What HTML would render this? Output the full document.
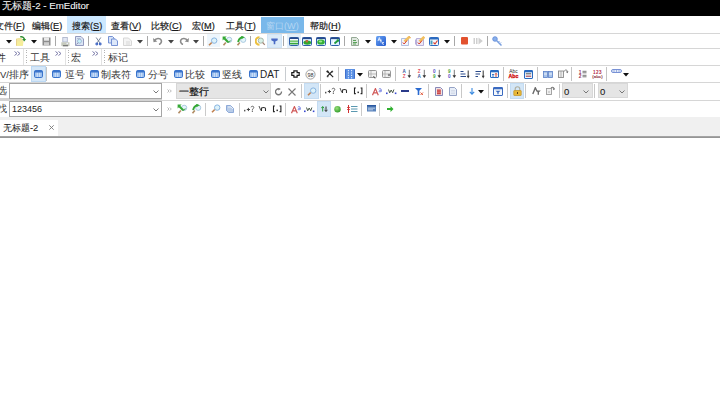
<!DOCTYPE html>
<html><head><meta charset="utf-8">
<style>
html,body{margin:0;padding:0;width:720px;height:417px;overflow:hidden;background:#fff;position:relative;font-family:"Liberation Sans",sans-serif;}
div,span,svg{position:absolute;display:block;}
.t{white-space:nowrap;line-height:10px;color:#1e1e1e;-webkit-text-stroke:0.2px currentColor;}
</style></head><body>
<div style="left:0;top:0;width:720px;height:16px;background:#000"></div>
<span class="t" style="left:2px;top:1px;font-size:9.7px;color:#f2f2f2;-webkit-text-stroke:0.1px #f2f2f2;">无标题-2 - EmEditor</span>
<div style="left:67px;top:16px;width:39px;height:17px;background:#cce8ff;"></div>
<div style="left:261px;top:17px;width:43px;height:16px;background:#79b8ea;"></div>
<span class="t" style="left:-5px;top:21px;font-size:9.2px;color:#1a1a1a;-webkit-text-stroke:0.2px #1a1a1a;">文件(<u>F</u>)</span>
<span class="t" style="left:32px;top:21px;font-size:9.2px;color:#1a1a1a;-webkit-text-stroke:0.2px #1a1a1a;">编辑(<u>E</u>)</span>
<span class="t" style="left:72px;top:21px;font-size:9.2px;color:#1a1a1a;-webkit-text-stroke:0.2px #1a1a1a;">搜索(<u>S</u>)</span>
<span class="t" style="left:111px;top:21px;font-size:9.2px;color:#1a1a1a;-webkit-text-stroke:0.2px #1a1a1a;">查看(<u>V</u>)</span>
<span class="t" style="left:151px;top:21px;font-size:9.2px;color:#1a1a1a;-webkit-text-stroke:0.2px #1a1a1a;">比较(<u>C</u>)</span>
<span class="t" style="left:192px;top:21px;font-size:9.2px;color:#1a1a1a;-webkit-text-stroke:0.2px #1a1a1a;">宏(<u>M</u>)</span>
<span class="t" style="left:226px;top:21px;font-size:9.2px;color:#1a1a1a;-webkit-text-stroke:0.2px #1a1a1a;">工具(<u>T</u>)</span>
<span class="t" style="left:310px;top:21px;font-size:9.2px;color:#1a1a1a;-webkit-text-stroke:0.2px #1a1a1a;">帮助(<u>H</u>)</span>
<span class="t" style="left:266px;top:21px;font-size:9.2px;color:#b4d6f2;-webkit-text-stroke:0;">窗口(<u>W</u>)</span>
<div style="left:0px;top:33px;width:720px;height:1px;background:#d6d6d6;"></div>
<div style="left:0px;top:48px;width:720px;height:1px;background:#d6d6d6;"></div>
<div style="left:0px;top:65px;width:720px;height:1px;background:#d6d6d6;"></div>
<div style="left:0px;top:82px;width:720px;height:1px;background:#d6d6d6;"></div>
<div style="left:0px;top:100px;width:720px;height:1px;background:#d6d6d6;"></div>
<svg style="left:6px;top:40px" width="6" height="4" viewBox="0 0 6 4"><path d="M0 0H6L3 3.5Z" fill="#111"/></svg>
<svg style="left:16px;top:36px" width="11" height="10" viewBox="0 0 11 10"><path d="M0.3 2.8L2 2H5.5L7.3 5L7 9.7H0.3Z" fill="#f2e6a0"/><path d="M0.3 9.7L1.5 5.2H7.5L6.5 9.7Z" fill="#f6ee9a"/><path d="M0.3 2.8V9.7" stroke="#e0c070" stroke-width="0.8"/><path d="M4.2 0.9C6 0.4 8 1.2 8.5 3.5" fill="none" stroke="#2e8e30" stroke-width="1.5"/><path d="M6.2 3H10.2L8.2 5.6Z" fill="#2e8e30"/></svg>
<svg style="left:31px;top:40px" width="6" height="4" viewBox="0 0 6 4"><path d="M0 0H6L3 3.5Z" fill="#111"/></svg>
<svg style="left:42px;top:37px" width="9" height="9" viewBox="0 0 9 9"><rect x="0.5" y="0.5" width="8" height="8" fill="#8d8d8d"/><rect x="2" y="0.5" width="5" height="3.2" fill="#e9e9e9"/><rect x="2" y="5.2" width="5" height="3.3" fill="#cfcfcf"/></svg>
<div style="left:55px;top:36px;width:1px;height:10px;background:#a8a8a8;"></div>
<svg style="left:61px;top:37px" width="9" height="10" viewBox="0 0 9 10"><rect x="1.8" y="0.5" width="4.5" height="4.5" fill="#e2e8f4" stroke="#a8b0c8" stroke-width="0.8"/><path d="M0.3 5.2H8.5V8.2L7.5 9.3H1.2L0.3 8.2Z" fill="#c6cabe"/><rect x="2" y="8" width="5" height="1.3" fill="#7a7a7a"/><rect x="5.5" y="6" width="1.5" height="1" fill="#eef"/></svg>
<svg style="left:75px;top:36px" width="9" height="10" viewBox="0 0 9 10"><path d="M0.5 0.5H6L8.5 3V9.5H0.5Z" fill="#dbe6f4" stroke="#8a90b8" stroke-width="0.9"/><path d="M2 2.5H5.5" stroke="#9aa0c0" stroke-width="0.6"/><circle cx="4.5" cy="5.2" r="2" fill="#c8f2fa" stroke="#90a8c8" stroke-width="0.7"/><path d="M3 6.8L1.5 8.5" stroke="#8080a8" stroke-width="0.9"/></svg>
<div style="left:88px;top:36px;width:1px;height:10px;background:#a8a8a8;"></div>
<svg style="left:95px;top:37px" width="7" height="9" viewBox="0 0 7 9"><path d="M1.2 0.5L4.8 5.8M5.8 0.5L2.2 5.8" stroke="#6a7890" stroke-width="0.9"/><circle cx="1.8" cy="7" r="1.4" fill="#3a60c0"/><circle cx="5.2" cy="7" r="1.4" fill="#3a60c0"/><circle cx="1.8" cy="7" r="0.5" fill="#9ab0e0"/><circle cx="5.2" cy="7" r="0.5" fill="#9ab0e0"/></svg>
<svg style="left:108px;top:36px" width="10" height="10" viewBox="0 0 10 10"><path d="M0.5 0.5H4.5L6 2V7H0.5Z" fill="#d8e4f8" stroke="#6a88d0" stroke-width="0.9"/><path d="M3.5 3H7.5L9.5 5V9.5H3.5Z" fill="#dde8fa" stroke="#6a88d0" stroke-width="0.9"/></svg>
<svg style="left:123px;top:37px" width="9" height="9" viewBox="0 0 9 9"><path d="M0.5 1H5.5L8.5 4V8.5H0.5Z" fill="#f4f4f4" stroke="#d2d2d2" stroke-width="0.9"/><rect x="3" y="4" width="4" height="4" fill="#e6e6e6"/></svg>
<svg style="left:137px;top:40px" width="6" height="4" viewBox="0 0 6 4"><path d="M0 0H6L3 3.5Z" fill="#444"/></svg>
<div style="left:147px;top:36px;width:1px;height:10px;background:#a8a8a8;"></div>
<svg style="left:153px;top:37px" width="10" height="8" viewBox="0 0 10 8"><g><path d="M1.5 3.5C3 1 7 0.8 8.2 3.2C9 5 7.5 7 6 7.5" fill="none" stroke="#8b8b8b" stroke-width="1.6"/><path d="M0 1L0.5 5.2L4.3 4.6Z" fill="#8b8b8b"/></g></svg>
<svg style="left:168px;top:40px" width="6" height="4" viewBox="0 0 6 4"><path d="M0 0H6L3 3.5Z" fill="#444"/></svg>
<svg style="left:179px;top:37px" width="10" height="8" viewBox="0 0 10 8"><g transform="translate(10 0) scale(-1 1)"><path d="M1.5 3.5C3 1 7 0.8 8.2 3.2C9 5 7.5 7 6 7.5" fill="none" stroke="#8b8b8b" stroke-width="1.6"/><path d="M0 1L0.5 5.2L4.3 4.6Z" fill="#8b8b8b"/></g></svg>
<svg style="left:193px;top:40px" width="6" height="4" viewBox="0 0 6 4"><path d="M0 0H6L3 3.5Z" fill="#444"/></svg>
<div style="left:203px;top:36px;width:1px;height:10px;background:#a8a8a8;"></div>
<div style="left:207px;top:34px;width:13px;height:13px;background:#eef6fc;box-sizing:border-box;border:1px solid #eef6fc;"></div>
<svg style="left:208px;top:37px" width="10" height="9" viewBox="0 0 10 9"><path d="M1 8.3L3.8 5.5" stroke="#c08050" stroke-width="1.6"/><circle cx="6.2" cy="3.6" r="2.7" fill="#ddf2fa" stroke="#88b4e0" stroke-width="1"/></svg>
<svg style="left:222px;top:36px" width="11" height="10" viewBox="0 0 11 10"><path d="M1.5 9.3L3.8 6.6" stroke="#b08a62" stroke-width="1.6"/><circle cx="7.2" cy="3.8" r="2.6" fill="#e4f5fa" stroke="#a4c4dc" stroke-width="0.9"/><path d="M2.2 2.2L6.2 6.2" stroke="#34a834" stroke-width="2"/><path d="M0.6 0.6H4.6L0.6 4.6Z" fill="#34a834"/><path d="M6 6.3C7 6.3 8 5.6 8.2 4.5" fill="none" stroke="#2a9a2a" stroke-width="1"/></svg>
<svg style="left:236px;top:36px" width="11" height="10" viewBox="0 0 11 10"><path d="M1.5 9.3L3.8 6.6" stroke="#b08a62" stroke-width="1.6"/><circle cx="7.2" cy="3.8" r="2.6" fill="#e4f5fa" stroke="#a4c4dc" stroke-width="0.9"/><path d="M2.2 6.2C2.5 3.5 4 1.8 6.5 1.2" fill="none" stroke="#34a834" stroke-width="1.9"/><path d="M5.2 -0.4L8.8 1.3L5.4 3.2Z" fill="#34a834"/></svg>
<div style="left:250px;top:36px;width:1px;height:10px;background:#a8a8a8;"></div>
<svg style="left:255px;top:36px" width="11" height="10" viewBox="0 0 11 10"><path d="M4.5 1.2A3.8 3.8 0 0 0 4.5 8.8" fill="none" stroke="#ecc040" stroke-width="2"/><circle cx="5.8" cy="4.6" r="2.6" fill="#d8f0e8" stroke="#a0b0a0" stroke-width="0.9"/><path d="M7.6 6.5L9.8 8.8" stroke="#a08070" stroke-width="1.2"/></svg>
<div style="left:267px;top:34px;width:15px;height:14px;background:#dcebf8;box-sizing:border-box;border:1px solid #d0e4f6;"></div>
<svg style="left:271px;top:38px" width="7" height="7" viewBox="0 0 7 7"><path d="M0.3 0.6H6.7V2.2L4.3 3.6V6.3H2.7V3.6L0.3 2.2Z" fill="#4a6ac4"/></svg>
<div style="left:283px;top:36px;width:1px;height:10px;background:#a8a8a8;"></div>
<div style="left:287px;top:34px;width:14px;height:14px;background:#e3eff9;box-sizing:border-box;border:1px solid #e3eff9;"></div>
<svg style="left:289px;top:37px" width="10" height="9" viewBox="0 0 10 9"><rect x="0.5" y="0.5" width="9" height="8" rx="1" fill="#dcefff" stroke="#2f5fa8" stroke-width="1"/><rect x="0.5" y="0.5" width="9" height="1.6" fill="#26488a"/><rect x="1" y="2.2" width="8" height="1.3" fill="#fff"/><rect x="1" y="3.5" width="8" height="1.4" fill="#5cc050"/><rect x="1" y="4.9" width="8" height="0.9" fill="#e8fff0"/><rect x="1" y="5.8" width="8" height="1.6" fill="#3aa83a"/></svg>
<svg style="left:302px;top:37px" width="10" height="9" viewBox="0 0 10 9"><rect x="0.5" y="0.5" width="9" height="8" rx="1" fill="#dcefff" stroke="#2f5fa8" stroke-width="1"/><rect x="0.5" y="0.5" width="9" height="1.6" fill="#26488a"/><ellipse cx="5.3" cy="5.6" rx="3.8" ry="2.2" fill="#2ea82e"/><rect x="3.6" y="3" width="2.4" height="2.4" fill="#b86a40"/></svg>
<svg style="left:316px;top:37px" width="10" height="9" viewBox="0 0 10 9"><rect x="0.5" y="0.5" width="9" height="8" rx="1" fill="#dcefff" stroke="#2f5fa8" stroke-width="1"/><rect x="0.5" y="0.5" width="9" height="1.6" fill="#26488a"/><ellipse cx="5" cy="5" rx="3.8" ry="2.6" fill="#34b034"/><ellipse cx="4.5" cy="4.5" rx="1.8" ry="1" fill="#a0e890"/></svg>
<svg style="left:330px;top:37px" width="10" height="9" viewBox="0 0 10 9"><rect x="0.5" y="0.5" width="9" height="8" rx="1" fill="#dcefff" stroke="#2f5fa8" stroke-width="1"/><rect x="0.5" y="0.5" width="9" height="1.6" fill="#26488a"/><path d="M3 7.5L4 3" stroke="#fff" stroke-width="1.2"/><path d="M4.5 6.5L8.5 3" stroke="#1e9a3a" stroke-width="1.8"/><path d="M6.5 2.5H9V5Z" fill="#1e9a3a"/></svg>
<div style="left:344px;top:36px;width:1px;height:10px;background:#a8a8a8;"></div>
<svg style="left:351px;top:37px" width="8" height="9" viewBox="0 0 8 9"><path d="M0.5 0.5H5.5L7.5 2.5V8.5H0.5Z" fill="#dfe7df" stroke="#8aa08a" stroke-width="0.9"/><path d="M2 3.5H5M2 5.5H6M2 7H5" stroke="#4a9a4a" stroke-width="0.9"/></svg>
<svg style="left:365px;top:40px" width="6" height="4" viewBox="0 0 6 4"><path d="M0 0H6L3 3.5Z" fill="#111"/></svg>
<svg style="left:376px;top:36px" width="10" height="10" viewBox="0 0 10 10"><defs><linearGradient id="gb" x1="0" y1="0" x2="1" y2="1"><stop offset="0" stop-color="#6aa4f4"/><stop offset="1" stop-color="#2258cc"/></linearGradient></defs><rect x="0" y="0" width="10" height="10" rx="1.5" fill="url(#gb)"/><path d="M2 5L3.3 1.5L4.6 5M2.5 3.8H4.2" stroke="#e8f0ff" stroke-width="0.9" fill="none"/><path d="M5 3.5V6.5M7.8 6.5C6 5.5 5.5 8.5 7.8 8.3" stroke="#fff" stroke-width="1" fill="none"/></svg>
<svg style="left:391px;top:40px" width="6" height="4" viewBox="0 0 6 4"><path d="M0 0H6L3 3.5Z" fill="#111"/></svg>
<svg style="left:401px;top:36px" width="10" height="10" viewBox="0 0 10 10"><path d="M0.5 2.5H7.5V9.5H0.5Z" fill="#f2f4fa" stroke="#a0b0d8" stroke-width="0.8"/><path d="M3.5 5.5L8.5 0.8" stroke="#f2c060" stroke-width="2.6"/><path d="M8 0.3L9.8 2" stroke="#e8a040" stroke-width="1"/><path d="M1.8 6.5L3.2 8L6 4.5" fill="none" stroke="#d83a2a" stroke-width="1"/></svg>
<svg style="left:415px;top:36px" width="10" height="10" viewBox="0 0 10 10"><path d="M1.5 2.5H8.5V9.5H1.5Z" fill="#ece8f6" stroke="#a8a0d0" stroke-width="0.8"/><path d="M0.5 3.5V8.5" stroke="#b8b0dc"/><path d="M4.5 5.5L9.3 0.8" stroke="#f2c060" stroke-width="2.6"/><path d="M2.8 6.5L4.2 8L7 4.5" fill="none" stroke="#d83a2a" stroke-width="1"/></svg>
<svg style="left:429px;top:37px" width="10" height="9" viewBox="0 0 10 9"><rect x="0.5" y="0.5" width="9" height="8" rx="1" fill="#f4f8fc" stroke="#2a6ac0" stroke-width="1"/><rect x="0.5" y="0.5" width="9" height="2" fill="#2a6ac0"/><rect x="1.5" y="3.5" width="2" height="4" fill="#48a0c0"/><path d="M4.5 5.5L6 7L8.5 3.5" fill="none" stroke="#d83a2a" stroke-width="1.1"/></svg>
<svg style="left:444px;top:40px" width="6" height="4" viewBox="0 0 6 4"><path d="M0 0H6L3 3.5Z" fill="#111"/></svg>
<div style="left:454px;top:36px;width:1px;height:10px;background:#a8a8a8;"></div>
<svg style="left:461px;top:37px" width="7" height="8" viewBox="0 0 7 8"><rect x="0" y="0" width="7" height="7.5" rx="1" fill="#e2512e"/></svg>
<svg style="left:473px;top:37px" width="10" height="8" viewBox="0 0 10 8"><rect x="0.5" y="1" width="1.5" height="6" fill="#cfcfcf"/><rect x="3" y="1" width="1.5" height="6" fill="#cfcfcf"/><path d="M5.5 0.5L9.8 4L5.5 7.5Z" fill="#cfcfcf"/></svg>
<div style="left:487px;top:36px;width:1px;height:10px;background:#a8a8a8;"></div>
<svg style="left:492px;top:36px" width="11" height="10" viewBox="0 0 11 10"><circle cx="3" cy="3" r="2.3" fill="#8ab0ea" stroke="#5a86d8" stroke-width="0.8"/><path d="M4.5 4.5L9.5 9.5" stroke="#7aa0e0" stroke-width="1.5"/><path d="M6.5 6L7.5 5M8 7.5L9 6.5" stroke="#7aa0e0"/></svg>
<span class="t" style="left:-4px;top:53px;font-size:9.5px;color:#333;-webkit-text-stroke:0;">件</span>
<svg style="left:14px;top:51px" width="7" height="5" viewBox="0 0 7 5"><path d="M0.5 0.5L3 2.5L0.5 4.5M3.5 0.5L6 2.5L3.5 4.5" fill="none" stroke="#7878a8" stroke-width="1"/></svg>
<svg style="left:55px;top:51px" width="7" height="5" viewBox="0 0 7 5"><path d="M0.5 0.5L3 2.5L0.5 4.5M3.5 0.5L6 2.5L3.5 4.5" fill="none" stroke="#7878a8" stroke-width="1"/></svg>
<svg style="left:92px;top:51px" width="7" height="5" viewBox="0 0 7 5"><path d="M0.5 0.5L3 2.5L0.5 4.5M3.5 0.5L6 2.5L3.5 4.5" fill="none" stroke="#7878a8" stroke-width="1"/></svg>
<div style="left:23px;top:49px;width:1px;height:16px;background:#e2e2e2;"></div>
<div style="left:65px;top:49px;width:1px;height:16px;background:#e2e2e2;"></div>
<div style="left:101px;top:49px;width:1px;height:16px;background:#e2e2e2;"></div>
<div style="left:26px;top:50px;width:1px;height:14px;background:repeating-linear-gradient(to bottom,#b4b4b4 0 1px,transparent 1px 2.5px)"></div>
<div style="left:68px;top:50px;width:1px;height:14px;background:repeating-linear-gradient(to bottom,#b4b4b4 0 1px,transparent 1px 2.5px)"></div>
<div style="left:104px;top:50px;width:1px;height:14px;background:repeating-linear-gradient(to bottom,#b4b4b4 0 1px,transparent 1px 2.5px)"></div>
<span class="t" style="left:30px;top:53px;font-size:9.5px;color:#333;-webkit-text-stroke:0;">工具</span>
<span class="t" style="left:71px;top:53px;font-size:9.5px;color:#333;-webkit-text-stroke:0;">宏</span>
<span class="t" style="left:108px;top:53px;font-size:9.5px;color:#333;-webkit-text-stroke:0;">标记</span>
<span class="t" style="left:0px;top:70px;font-size:9.5px;color:#333;-webkit-text-stroke:0;">V/排序</span>
<div style="left:31px;top:66px;width:15px;height:16px;background:#d5e7f8;box-sizing:border-box;border:1px solid #bcd9f4;"></div>
<svg style="left:34px;top:70px" width="9" height="8" viewBox="0 0 9 8"><rect x="0.5" y="0.5" width="8" height="7" rx="1.2" fill="#9cc0ee" stroke="#3a74cc" stroke-width="1"/><rect x="0.5" y="0.5" width="8" height="2" rx="1" fill="#3a74cc"/><path d="M3.3 2.8V7M5.7 2.8V7" stroke="#eef4ff" stroke-width="0.7"/></svg>
<div style="left:46px;top:67px;width:1px;height:14px;background:#c4c4c4;"></div>
<svg style="left:52px;top:70px" width="9" height="8" viewBox="0 0 9 8"><rect x="0.5" y="0.5" width="8" height="7" rx="1.2" fill="#9cc0ee" stroke="#3a74cc" stroke-width="1"/><rect x="0.5" y="0.5" width="8" height="2" rx="1" fill="#3a74cc"/><path d="M3.3 2.8V7M5.7 2.8V7" stroke="#eef4ff" stroke-width="0.7"/></svg>
<span class="t" style="left:65px;top:70px;font-size:9.5px;color:#333;-webkit-text-stroke:0;">逗号</span>
<svg style="left:90px;top:70px" width="9" height="8" viewBox="0 0 9 8"><rect x="0.5" y="0.5" width="8" height="7" rx="1.2" fill="#9cc0ee" stroke="#3a74cc" stroke-width="1"/><rect x="0.5" y="0.5" width="8" height="2" rx="1" fill="#3a74cc"/><path d="M3.3 2.8V7M5.7 2.8V7" stroke="#eef4ff" stroke-width="0.7"/></svg>
<span class="t" style="left:101px;top:70px;font-size:9.5px;color:#333;-webkit-text-stroke:0;">制表符</span>
<svg style="left:136px;top:70px" width="9" height="8" viewBox="0 0 9 8"><rect x="0.5" y="0.5" width="8" height="7" rx="1.2" fill="#9cc0ee" stroke="#3a74cc" stroke-width="1"/><rect x="0.5" y="0.5" width="8" height="2" rx="1" fill="#3a74cc"/><path d="M3.3 2.8V7M5.7 2.8V7" stroke="#eef4ff" stroke-width="0.7"/></svg>
<span class="t" style="left:148px;top:70px;font-size:9.5px;color:#333;-webkit-text-stroke:0;">分号</span>
<svg style="left:174px;top:70px" width="9" height="8" viewBox="0 0 9 8"><rect x="0.5" y="0.5" width="8" height="7" rx="1.2" fill="#9cc0ee" stroke="#3a74cc" stroke-width="1"/><rect x="0.5" y="0.5" width="8" height="2" rx="1" fill="#3a74cc"/><path d="M3.3 2.8V7M5.7 2.8V7" stroke="#eef4ff" stroke-width="0.7"/></svg>
<span class="t" style="left:185px;top:70px;font-size:9.5px;color:#333;-webkit-text-stroke:0;">比较</span>
<svg style="left:211px;top:70px" width="9" height="8" viewBox="0 0 9 8"><rect x="0.5" y="0.5" width="8" height="7" rx="1.2" fill="#9cc0ee" stroke="#3a74cc" stroke-width="1"/><rect x="0.5" y="0.5" width="8" height="2" rx="1" fill="#3a74cc"/><path d="M3.3 2.8V7M5.7 2.8V7" stroke="#eef4ff" stroke-width="0.7"/></svg>
<span class="t" style="left:222px;top:70px;font-size:9.5px;color:#333;-webkit-text-stroke:0;">竖线</span>
<svg style="left:249px;top:70px" width="9" height="8" viewBox="0 0 9 8"><rect x="0.5" y="0.5" width="8" height="7" rx="1.2" fill="#9cc0ee" stroke="#3a74cc" stroke-width="1"/><rect x="0.5" y="0.5" width="8" height="2" rx="1" fill="#3a74cc"/><path d="M3.3 2.8V7M5.7 2.8V7" stroke="#eef4ff" stroke-width="0.7"/></svg>
<span class="t" style="left:260px;top:70px;font-size:10px;color:#1e1e1e;-webkit-text-stroke:0;">DAT</span>
<div style="left:285px;top:67px;width:1px;height:14px;background:#c8ccd0;"></div>
<svg style="left:291px;top:70px" width="9" height="8" viewBox="0 0 9 8"><path d="M2.9 0.8H6.1V2.6H8.2V5.4H6.1V7.2H2.9V5.4H0.8V2.6H2.9Z" fill="#fff" stroke="#181818" stroke-width="1.2" stroke-linejoin="miter"/></svg>
<svg style="left:305px;top:69px" width="11" height="11" viewBox="0 0 11 11"><circle cx="5.5" cy="5.5" r="4.6" fill="#fcfcfc" stroke="#8a8a8a" stroke-width="0.8"/><text x="5.5" y="7.6" font-size="5.5" text-anchor="middle" fill="#333" font-family="Liberation Sans">98</text></svg>
<div style="left:320px;top:67px;width:1px;height:14px;background:#c4c4c4;"></div>
<svg style="left:326px;top:70px" width="8" height="8" viewBox="0 0 8 8"><path d="M1 1L7.2 7.2M6.5 1L1.2 6.3" stroke="#222" stroke-width="1.1"/><circle cx="1.5" cy="1.5" r="1.1" fill="#222"/><circle cx="6.3" cy="1.6" r="0.9" fill="#444"/><circle cx="1.6" cy="6.4" r="0.9" fill="#444"/></svg>
<div style="left:338px;top:67px;width:1px;height:14px;background:#c4c4c4;"></div>
<svg style="left:345px;top:69px" width="10" height="10" viewBox="0 0 10 10"><rect x="0" y="0" width="10" height="10" rx="0.8" fill="#5a90e4"/><path d="M3.4 1V9.5M6.6 1V9.5" stroke="#e8f0ff" stroke-width="1" stroke-dasharray="1.2 1.2"/><path d="M0.5 0.5V9.5M9.5 0.5V9.5" stroke="#3a6ac8" stroke-width="0.8"/></svg>
<svg style="left:357px;top:73px" width="6" height="4" viewBox="0 0 6 4"><path d="M0 0H6L3 3.5Z" fill="#111"/></svg>
<svg style="left:368px;top:70px" width="9" height="9" viewBox="0 0 9 9"><rect x="0.5" y="0.5" width="8" height="7" rx="1" fill="#f2f2f2" stroke="#8a8a8a" stroke-width="0.9"/><path d="M3 1V7.5M1 4H8" stroke="#aaa" stroke-width="0.8"/><path d="M5.5 6L7 8.5" stroke="#555"/></svg>
<svg style="left:382px;top:70px" width="9" height="9" viewBox="0 0 9 9"><rect x="0.5" y="0.5" width="8" height="7" rx="1" fill="#f0f0f0" stroke="#8a8a8a" stroke-width="0.9"/><path d="M3 1V7.5M1 4H8" stroke="#aaa" stroke-width="0.8"/><circle cx="7" cy="5" r="1.2" fill="#888"/></svg>
<div style="left:395px;top:67px;width:1px;height:14px;background:#c4c4c4;"></div>
<svg style="left:402px;top:69px" width="10" height="10" viewBox="0 0 10 10"><text x="2.2" y="4.3" font-size="4.6" font-weight="bold" text-anchor="middle" fill="#3a5aa0" font-family="Liberation Sans">A</text><text x="2.2" y="9" font-size="4.6" font-weight="bold" text-anchor="middle" fill="#e05060" font-family="Liberation Sans">Z</text><path d="M7.3 0.8V7" stroke="#7a7a7a" stroke-width="1"/><path d="M5.5 6.2L7.3 9L9.1 6.2Z" fill="#333"/></svg>
<svg style="left:417px;top:69px" width="10" height="10" viewBox="0 0 10 10"><text x="2.2" y="4.3" font-size="4.6" font-weight="bold" text-anchor="middle" fill="#e05060" font-family="Liberation Sans">Z</text><text x="2.2" y="9" font-size="4.6" font-weight="bold" text-anchor="middle" fill="#3a5aa0" font-family="Liberation Sans">A</text><path d="M7.3 0.8V7" stroke="#7a7a7a" stroke-width="1"/><path d="M5.5 6.2L7.3 9L9.1 6.2Z" fill="#333"/></svg>
<svg style="left:432px;top:69px" width="10" height="10" viewBox="0 0 10 10"><text x="2.2" y="4.3" font-size="4.6" font-weight="bold" text-anchor="middle" fill="#5050c8" font-family="Liberation Sans">0</text><text x="2.2" y="9" font-size="4.6" font-weight="bold" text-anchor="middle" fill="#40a040" font-family="Liberation Sans">9</text><path d="M7.3 0.8V7" stroke="#7a7a7a" stroke-width="1"/><path d="M5.5 6.2L7.3 9L9.1 6.2Z" fill="#333"/></svg>
<svg style="left:447px;top:69px" width="10" height="10" viewBox="0 0 10 10"><text x="2.2" y="4.3" font-size="4.6" font-weight="bold" text-anchor="middle" fill="#40a040" font-family="Liberation Sans">9</text><text x="2.2" y="9" font-size="4.6" font-weight="bold" text-anchor="middle" fill="#5050c8" font-family="Liberation Sans">0</text><path d="M7.3 0.8V7" stroke="#7a7a7a" stroke-width="1"/><path d="M5.5 6.2L7.3 9L9.1 6.2Z" fill="#333"/></svg>
<svg style="left:460px;top:70px" width="10" height="9" viewBox="0 0 10 9"><path d="M0.5 1.5H3.5M0.5 4H5.5M0.5 6.5H6" stroke="#2a4a8a" stroke-width="1.1"/><path d="M8.2 0.5V7" stroke="#333"/><path d="M6.8 5.8L8.2 8.5L9.6 5.8Z" fill="#333"/></svg>
<svg style="left:475px;top:70px" width="10" height="9" viewBox="0 0 10 9"><path d="M0.5 1.5H6M0.5 4H5M0.5 6.5H3" stroke="#2a4a8a" stroke-width="1.1"/><path d="M8.2 0.5V7" stroke="#333"/><path d="M6.8 5.8L8.2 8.5L9.6 5.8Z" fill="#333"/></svg>
<svg style="left:490px;top:70px" width="9" height="8" viewBox="0 0 9 8"><rect x="0.5" y="0.5" width="8" height="7" rx="0.5" fill="#f4f8fc" stroke="#2a6ac0" stroke-width="1"/><rect x="0.5" y="0.5" width="8" height="1.8" fill="#2a6ac0"/><path d="M2 4.5H4M2 6H4" stroke="#3a7ad0"/><path d="M6 3.5V7M5 4.5L6 3.3L7 4.5" stroke="#d03a2a" stroke-width="0.9" fill="none"/></svg>
<div style="left:503px;top:67px;width:1px;height:14px;background:#c4c4c4;"></div>
<svg style="left:508px;top:69px" width="11" height="10" viewBox="0 0 11 10"><text x="5.5" y="4.3" font-size="4.8" text-anchor="middle" fill="#222" font-family="Liberation Sans">Abc</text><text x="5.5" y="9.2" font-size="5.2" font-weight="bold" text-anchor="middle" fill="#d01010" font-family="Liberation Sans" stroke="#d01010" stroke-width="0.3">Abc</text></svg>
<svg style="left:524px;top:70px" width="9" height="9" viewBox="0 0 9 9"><rect x="0.5" y="0.5" width="8" height="8" rx="0.5" fill="#f4f8fc" stroke="#2a6ac0" stroke-width="1"/><rect x="0.5" y="0.5" width="8" height="1.8" fill="#2a6ac0"/><path d="M1.8 3.8H7.2" stroke="#555" stroke-width="1"/><path d="M1.8 6.2H7.2" stroke="#a04050" stroke-width="1.1"/></svg>
<div style="left:537px;top:67px;width:1px;height:14px;background:#c4c4c4;"></div>
<svg style="left:543px;top:71px" width="10" height="7" viewBox="0 0 10 7"><rect x="0.5" y="0.5" width="4" height="6" fill="#a8c4ea" stroke="#5a80c8" stroke-width="0.8"/><rect x="5.5" y="0.5" width="4" height="6" fill="#a8c4ea" stroke="#5a80c8" stroke-width="0.8"/><path d="M1 3H4M6 3H9" stroke="#fff" stroke-width="0.8"/></svg>
<svg style="left:558px;top:69px" width="11" height="9" viewBox="0 0 11 9"><rect x="0.5" y="2" width="5" height="6.5" fill="#eee" stroke="#8a8a8a" stroke-width="0.9"/><path d="M3 2V8.5" stroke="#999" stroke-width="0.7"/><path d="M6 2.5C7 0.5 9 0.5 9.5 2.5" fill="none" stroke="#777"/><path d="M8 2.5H10.5L9.2 4.2Z" fill="#555"/></svg>
<div style="left:571px;top:67px;width:1px;height:14px;background:#c4c4c4;"></div>
<svg style="left:578px;top:69px" width="9" height="10" viewBox="0 0 9 10"><text x="2" y="4.5" font-size="4.8" font-weight="bold" text-anchor="middle" fill="#9a3050" font-family="Liberation Sans">1</text><text x="2" y="9" font-size="4.8" font-weight="bold" text-anchor="middle" fill="#9a3050" font-family="Liberation Sans">2</text><path d="M4.5 2.3H8.5M4.5 3.8H8.5M4.5 6.3H8.5M4.5 7.8H8.5" stroke="#555" stroke-width="0.8"/></svg>
<svg style="left:592px;top:69px" width="11" height="10" viewBox="0 0 11 10"><text x="5.5" y="4.5" font-size="4.6" text-anchor="middle" fill="#b02848" font-weight="bold" font-family="Liberation Sans" letter-spacing="0.4">123</text><text x="5.5" y="9" font-size="4.4" font-weight="bold" text-anchor="middle" fill="#8a2838" font-family="Liberation Sans">(abc)</text></svg>
<div style="left:606px;top:67px;width:1px;height:14px;background:#c4c4c4;"></div>
<svg style="left:611px;top:69px" width="11" height="4" viewBox="0 0 11 4"><rect x="0.5" y="0.5" width="10" height="3" rx="1.5" fill="#e4ecfa" stroke="#6a86d0" stroke-width="0.9"/><path d="M3 1V3M5.5 1V3M8 1V3" stroke="#6a86d0" stroke-width="0.6"/></svg>
<svg style="left:623px;top:73px" width="6" height="4" viewBox="0 0 6 4"><path d="M0 0H6L3 3.5Z" fill="#111"/></svg>
<span class="t" style="left:-3px;top:86px;font-size:9.5px;color:#333;-webkit-text-stroke:0;">选</span>
<div style="left:0px;top:98px;width:162px;height:3px;background:#d3d3d3;"></div>
<div style="left:9px;top:83px;width:153px;height:16px;background:#fff;box-sizing:border-box;border:1px solid #a6a6a6;"></div>
<svg style="left:153px;top:90px" width="6" height="4" viewBox="0 0 6 4"><path d="M0.5 0.5L3 3L5.5 0.5" fill="none" stroke="#6a6a6a" stroke-width="0.9"/></svg>
<svg style="left:167px;top:89px" width="5" height="4" viewBox="0 0 5 4"><path d="M0.5 0.5L2 2L0.5 3.5M2.8 0.5L4.3 2L2.8 3.5" fill="none" stroke="#b0b0b0" stroke-width="0.9"/></svg>
<div style="left:162px;top:83px;width:1px;height:16px;background:#fff;"></div>
<div style="left:176px;top:83px;width:95px;height:16px;background:#e5e5e5;box-sizing:border-box;border:1px solid #d6d6d6;"></div>
<span class="t" style="left:179px;top:87px;font-size:9.5px;color:#111;">一整行</span>
<svg style="left:263px;top:90px" width="6" height="4" viewBox="0 0 6 4"><path d="M0.5 0.5L3 3L5.5 0.5" fill="none" stroke="#6a6a6a" stroke-width="0.9"/></svg>
<svg style="left:275px;top:88px" width="8" height="8" viewBox="0 0 8 8"><path d="M6.5 3.5A3 3 0 1 1 4 0.8" fill="none" stroke="#777" stroke-width="1.3"/><path d="M3.2 -0.5L5.8 1L3.4 2.6Z" fill="#777"/></svg>
<svg style="left:288px;top:88px" width="8" height="8" viewBox="0 0 8 8"><path d="M0.5 0.5L7.5 7.5M7.5 0.5L0.5 7.5" stroke="#777" stroke-width="1.1"/></svg>
<div style="left:301px;top:84px;width:1px;height:14px;background:#c8c8c8;"></div>
<div style="left:304px;top:83px;width:15px;height:16px;background:#d3e6f7;box-sizing:border-box;border:1px solid #c4dcf2;"></div>
<svg style="left:307px;top:87px" width="11" height="9" viewBox="0 0 11 9"><path d="M1 8.3L3.8 5.5" stroke="#c08050" stroke-width="1.6"/><circle cx="6.2" cy="3.6" r="2.7" fill="#ddf2fa" stroke="#88b4e0" stroke-width="1"/></svg>
<div style="left:320px;top:84px;width:1px;height:14px;background:#c8c8c8;"></div>
<svg style="left:324px;top:87px" width="12" height="8" viewBox="0 0 12 8"><rect x="1" y="4.8" width="1.4" height="1.6" fill="#555"/><path d="M3.8 4.5H7M5.4 2.9V6.1" stroke="#444" stroke-width="1"/><path d="M8 2.3C8 1 10.8 0.8 10.8 2.4C10.8 3.6 9.4 3.6 9.4 5" fill="none" stroke="#555" stroke-width="0.9"/><rect x="8.8" y="5.6" width="1.2" height="1.2" fill="#555"/></svg>
<svg style="left:339px;top:87px" width="9" height="7" viewBox="0 0 9 7"><path d="M1 1L2.8 5.5" stroke="#444" stroke-width="0.9"/><path d="M3.5 6V2.5M3.5 3.2C4.2 2.2 7.5 2 7.5 3.5V6" fill="none" stroke="#333" stroke-width="1.05"/></svg>
<svg style="left:353px;top:87px" width="11" height="8" viewBox="0 0 11 8"><path d="M2.8 1H1.5V6.6H2.8M7.6 1H8.9V6.6H7.6" fill="none" stroke="#222" stroke-width="1.1"/><rect x="4.5" y="4.6" width="1.4" height="1.5" fill="#222"/></svg>
<div style="left:366px;top:84px;width:1px;height:14px;background:#c8c8c8;"></div>
<svg style="left:372px;top:88px" width="11" height="8" viewBox="0 0 11 8"><path d="M0.5 7.2L3.4 0.6L6.3 7.2M1.7 4.8H5.1" fill="none" stroke="#d05858" stroke-width="1.2"/><path d="M6.8 1.2C7.3 0.4 9.2 0.4 9.2 1.6V3.8M9.2 2.4C7.5 2.2 6.6 3 7.2 3.6C7.7 4 8.8 3.7 9.2 3.2" fill="none" stroke="#6a78e0" stroke-width="0.9"/></svg>
<svg style="left:386px;top:88px" width="11" height="7" viewBox="0 0 11 7"><path d="M2.5 1.5L3.7 4.8L5.2 2L6.7 4.8L7.9 1.5" fill="none" stroke="#4a5a4a" stroke-width="1"/><rect x="0" y="4.5" width="1.6" height="1.6" fill="#3a4ad0"/><rect x="8.8" y="4.5" width="1.6" height="1.6" fill="#3a4ad0"/></svg>
<div style="left:401px;top:90px;width:8px;height:2px;background:#2a3a8a;"></div>
<svg style="left:415px;top:88px" width="9" height="8" viewBox="0 0 9 8"><path d="M0 0H7L4.3 2.8V7H2.7V2.8Z" fill="#2a6ad0"/><path d="M5.5 4.5L8 7M8 4.5L5.5 7" stroke="#e05030" stroke-width="0.9"/></svg>
<div style="left:428px;top:84px;width:1px;height:14px;background:#c8c8c8;"></div>
<svg style="left:435px;top:87px" width="8" height="9" viewBox="0 0 8 9"><path d="M0.5 0.5H5.5L7.5 2.5V8.5H0.5Z" fill="#f0e4e4" stroke="#7a7ab0" stroke-width="0.9"/><rect x="2" y="2.5" width="3.8" height="4.8" fill="#c83a3a"/><path d="M2 4H5.8M2 5.7H5.8" stroke="#f0c0c0" stroke-width="0.5"/></svg>
<svg style="left:449px;top:87px" width="8" height="9" viewBox="0 0 8 9"><path d="M0.5 0.5H5.5L7.5 2.5V8.5H0.5Z" fill="#e8eef8" stroke="#8a9ac0" stroke-width="0.9"/><path d="M2 3.5H6M2 5H6M2 6.5H6" stroke="#c8d0e0" stroke-width="0.6"/></svg>
<div style="left:461px;top:84px;width:1px;height:14px;background:#c8c8c8;"></div>
<svg style="left:469px;top:88px" width="6" height="7" viewBox="0 0 6 7"><path d="M3 0V6M0.8 3.8L3 6.2L5.2 3.8" fill="none" stroke="#3a8ae0" stroke-width="1.1"/></svg>
<svg style="left:478px;top:90px" width="6" height="4" viewBox="0 0 6 4"><path d="M0 0H6L3 3.5Z" fill="#111"/></svg>
<div style="left:488px;top:84px;width:1px;height:14px;background:#c8c8c8;"></div>
<svg style="left:493px;top:87px" width="10" height="9" viewBox="0 0 10 9"><rect x="0.5" y="0.5" width="9" height="8" rx="0.5" fill="#f4f8fc" stroke="#3a6ac0" stroke-width="1"/><rect x="0.5" y="0.5" width="9" height="1.8" fill="#3a6ac0"/><path d="M2.5 3.8H7.5L5.6 5.6V7.2H4.4V5.6Z" fill="#3a6ac0"/></svg>
<div style="left:507px;top:84px;width:1px;height:14px;background:#c8c8c8;"></div>
<div style="left:510px;top:83px;width:14px;height:16px;background:#d3e6f7;box-sizing:border-box;border:1px solid #c4dcf2;"></div>
<svg style="left:513px;top:86px" width="9" height="10" viewBox="0 0 9 10"><path d="M2.2 4.5V3A2.3 2.3 0 0 1 6.8 3V4.5" fill="none" stroke="#b0b0a0" stroke-width="1.1"/><rect x="0.8" y="4.5" width="7.4" height="5" rx="0.5" fill="#e8b838" stroke="#c09020" stroke-width="0.7"/><rect x="4" y="6" width="1" height="2" fill="#604010"/></svg>
<div style="left:525px;top:84px;width:1px;height:14px;background:#c8c8c8;"></div>
<svg style="left:532px;top:87px" width="9" height="8" viewBox="0 0 9 8"><path d="M0.8 7L3.3 0.8L5 4.2" fill="none" stroke="#6a6a6a" stroke-width="1.4"/><path d="M3.8 3.5H8.8L7 5.3V7.8H5.6V5.3Z" fill="#6a6a6a"/></svg>
<svg style="left:546px;top:86px" width="9" height="9" viewBox="0 0 9 9"><rect x="0.5" y="2.5" width="5" height="6" fill="#f0f0f0" stroke="#9a9a9a" stroke-width="0.9"/><rect x="2.5" y="5.5" width="1" height="1" fill="#777"/><path d="M5 2.3C6 0.8 7.5 0.8 8 2.5" fill="none" stroke="#777" stroke-width="1.1"/><path d="M6.5 2.4H9.2L7.9 4.3Z" fill="#555"/></svg>
<div style="left:559px;top:84px;width:1px;height:14px;background:#c8c8c8;"></div>
<div style="left:562px;top:83px;width:31px;height:15px;background:#e5e5e5;box-sizing:border-box;border:1px solid #d8d8d8;"></div>
<span class="t" style="left:564px;top:87px;font-size:9.5px;color:#222;-webkit-text-stroke:0.1px #222;">0</span>
<svg style="left:583px;top:90px" width="6" height="4" viewBox="0 0 6 4"><path d="M0.5 0.5L3 3L5.5 0.5" fill="none" stroke="#6a6a6a" stroke-width="0.9"/></svg>
<div style="left:594px;top:84px;width:1px;height:14px;background:#c8c8c8;"></div>
<div style="left:598px;top:83px;width:30px;height:15px;background:#e5e5e5;box-sizing:border-box;border:1px solid #d8d8d8;"></div>
<span class="t" style="left:600px;top:87px;font-size:9.5px;color:#222;-webkit-text-stroke:0.1px #222;">0</span>
<svg style="left:619px;top:90px" width="6" height="4" viewBox="0 0 6 4"><path d="M0.5 0.5L3 3L5.5 0.5" fill="none" stroke="#6a6a6a" stroke-width="0.9"/></svg>
<span class="t" style="left:-3px;top:104px;font-size:9.5px;color:#333;-webkit-text-stroke:0;">找</span>
<div style="left:9px;top:101px;width:153px;height:16px;background:#fff;box-sizing:border-box;border:1px solid #a6a6a6;"></div>
<span class="t" style="left:12px;top:104px;font-size:9px;color:#1a1a1a;-webkit-text-stroke:0;">123456</span>
<svg style="left:153px;top:108px" width="6" height="4" viewBox="0 0 6 4"><path d="M0.5 0.5L3 3L5.5 0.5" fill="none" stroke="#6a6a6a" stroke-width="0.9"/></svg>
<svg style="left:167px;top:107px" width="5" height="4" viewBox="0 0 5 4"><path d="M0.5 0.5L2 2L0.5 3.5M2.8 0.5L4.3 2L2.8 3.5" fill="none" stroke="#b0b0b0" stroke-width="0.9"/></svg>
<svg style="left:177px;top:104px" width="11" height="10" viewBox="0 0 11 10"><path d="M1.5 9.3L3.8 6.6" stroke="#b08a62" stroke-width="1.6"/><circle cx="7.2" cy="3.8" r="2.6" fill="#e4f5fa" stroke="#a4c4dc" stroke-width="0.9"/><path d="M2.2 2.2L6.2 6.2" stroke="#34a834" stroke-width="2"/><path d="M0.6 0.6H4.6L0.6 4.6Z" fill="#34a834"/><path d="M6 6.3C7 6.3 8 5.6 8.2 4.5" fill="none" stroke="#2a9a2a" stroke-width="1"/></svg>
<svg style="left:191px;top:104px" width="11" height="10" viewBox="0 0 11 10"><path d="M1.5 9.3L3.8 6.6" stroke="#b08a62" stroke-width="1.6"/><circle cx="7.2" cy="3.8" r="2.6" fill="#e4f5fa" stroke="#a4c4dc" stroke-width="0.9"/><path d="M2.2 6.2C2.5 3.5 4 1.8 6.5 1.2" fill="none" stroke="#34a834" stroke-width="1.9"/><path d="M5.2 -0.4L8.8 1.3L5.4 3.2Z" fill="#34a834"/></svg>
<div style="left:205px;top:103px;width:1px;height:13px;background:#cacaca;"></div>
<svg style="left:211px;top:104px" width="11" height="10" viewBox="0 0 11 10"><path d="M1 8.3L3.8 5.5" stroke="#c08050" stroke-width="1.6"/><circle cx="6.2" cy="3.6" r="2.7" fill="#ddf2fa" stroke="#88b4e0" stroke-width="1"/></svg>
<svg style="left:226px;top:105px" width="8" height="8" viewBox="0 0 8 8"><path d="M0.5 0.5H4.5L7.5 3.5V7.5H2.5L0.5 5.5Z" fill="#b8cce8" stroke="#7a9ad0" stroke-width="0.8"/><path d="M2 2H5L7 4" stroke="#fff" stroke-width="0.7" fill="none"/></svg>
<div style="left:239px;top:103px;width:1px;height:13px;background:#cacaca;"></div>
<svg style="left:243px;top:105px" width="12" height="8" viewBox="0 0 12 8"><rect x="1" y="4.8" width="1.4" height="1.6" fill="#555"/><path d="M3.8 4.5H7M5.4 2.9V6.1" stroke="#444" stroke-width="1"/><path d="M8 2.3C8 1 10.8 0.8 10.8 2.4C10.8 3.6 9.4 3.6 9.4 5" fill="none" stroke="#555" stroke-width="0.9"/><rect x="8.8" y="5.6" width="1.2" height="1.2" fill="#555"/></svg>
<svg style="left:258px;top:105px" width="9" height="7" viewBox="0 0 9 7"><path d="M1 1L2.8 5.5" stroke="#444" stroke-width="0.9"/><path d="M3.5 6V2.5M3.5 3.2C4.2 2.2 7.5 2 7.5 3.5V6" fill="none" stroke="#333" stroke-width="1.05"/></svg>
<svg style="left:272px;top:105px" width="11" height="8" viewBox="0 0 11 8"><path d="M2.8 1H1.5V6.6H2.8M7.6 1H8.9V6.6H7.6" fill="none" stroke="#222" stroke-width="1.1"/><rect x="4.5" y="4.6" width="1.4" height="1.5" fill="#222"/></svg>
<div style="left:285px;top:103px;width:1px;height:13px;background:#cacaca;"></div>
<svg style="left:291px;top:106px" width="11" height="8" viewBox="0 0 11 8"><path d="M0.5 7.2L3.4 0.6L6.3 7.2M1.7 4.8H5.1" fill="none" stroke="#d05858" stroke-width="1.2"/><path d="M6.8 1.2C7.3 0.4 9.2 0.4 9.2 1.6V3.8M9.2 2.4C7.5 2.2 6.6 3 7.2 3.6C7.7 4 8.8 3.7 9.2 3.2" fill="none" stroke="#6a78e0" stroke-width="0.9"/></svg>
<svg style="left:304px;top:106px" width="11" height="7" viewBox="0 0 11 7"><path d="M2.5 1.5L3.7 4.8L5.2 2L6.7 4.8L7.9 1.5" fill="none" stroke="#4a5a4a" stroke-width="1"/><rect x="0" y="4.5" width="1.6" height="1.6" fill="#3a4ad0"/><rect x="8.8" y="4.5" width="1.6" height="1.6" fill="#3a4ad0"/></svg>
<div style="left:317px;top:101px;width:14px;height:16px;background:#d3e6f7;box-sizing:border-box;border:1px solid #c4dcf2;"></div>
<svg style="left:321px;top:106px" width="7" height="6" viewBox="0 0 7 6"><path d="M1.7 5.5V0.8M0.3 2.2L1.7 0.5L3.1 2.2" fill="none" stroke="#2a9a3a" stroke-width="1"/><path d="M5 0.5V5.2M3.6 3.8L5 5.5L6.4 3.8" fill="none" stroke="#333" stroke-width="1"/></svg>
<svg style="left:334px;top:106px" width="7" height="7" viewBox="0 0 7 7"><defs><radialGradient id="gg" cx="0.4" cy="0.35" r="0.7"><stop offset="0" stop-color="#9ae07a"/><stop offset="1" stop-color="#2e9a2a"/></radialGradient></defs><circle cx="3.5" cy="3.2" r="3.2" fill="url(#gg)"/></svg>
<svg style="left:347px;top:105px" width="11" height="8" viewBox="0 0 11 8"><path d="M1.5 0V8" stroke="#d03030" stroke-width="1"/><path d="M0 2L3 5M3 2L0 5" stroke="#d03030" stroke-width="0.8"/><path d="M4 1.5H10.5M4 4H10.5M4 6.5H10.5" stroke="#5a98b0" stroke-width="1.1"/></svg>
<div style="left:361px;top:103px;width:1px;height:13px;background:#cacaca;"></div>
<svg style="left:367px;top:105px" width="9" height="7" viewBox="0 0 9 7"><rect x="0" y="0" width="9" height="6.5" fill="#5a84bc"/><rect x="0" y="0" width="9" height="1.5" fill="#2a58a0"/><path d="M1 3.2H8M1 4.8H6" stroke="#dce8f8" stroke-width="0.7"/></svg>
<div style="left:379px;top:103px;width:1px;height:13px;background:#cacaca;"></div>
<svg style="left:387px;top:106px" width="7" height="6" viewBox="0 0 7 6"><path d="M0 2H3.5V0L6.5 3L3.5 6V4H0Z" fill="#30b030"/></svg>
<div style="left:0px;top:117px;width:720px;height:19px;background:#f0f0f0;"></div>
<div style="left:0px;top:120px;width:58px;height:16px;background:#fff;"></div>
<span class="t" style="left:3px;top:123px;font-size:9.4px;color:#222;-webkit-text-stroke:0.05px #222;">无标题-2</span>
<svg style="left:49px;top:125px" width="5" height="5" viewBox="0 0 5 5"><path d="M0.3 0.3L4.7 4.7M4.7 0.3L0.3 4.7" stroke="#777" stroke-width="0.9"/></svg>
<div style="left:0px;top:136px;width:720px;height:1px;background:#a4a4a4;"></div>
<div style="left:0px;top:137px;width:720px;height:1px;background:#959595;"></div>
</body></html>
